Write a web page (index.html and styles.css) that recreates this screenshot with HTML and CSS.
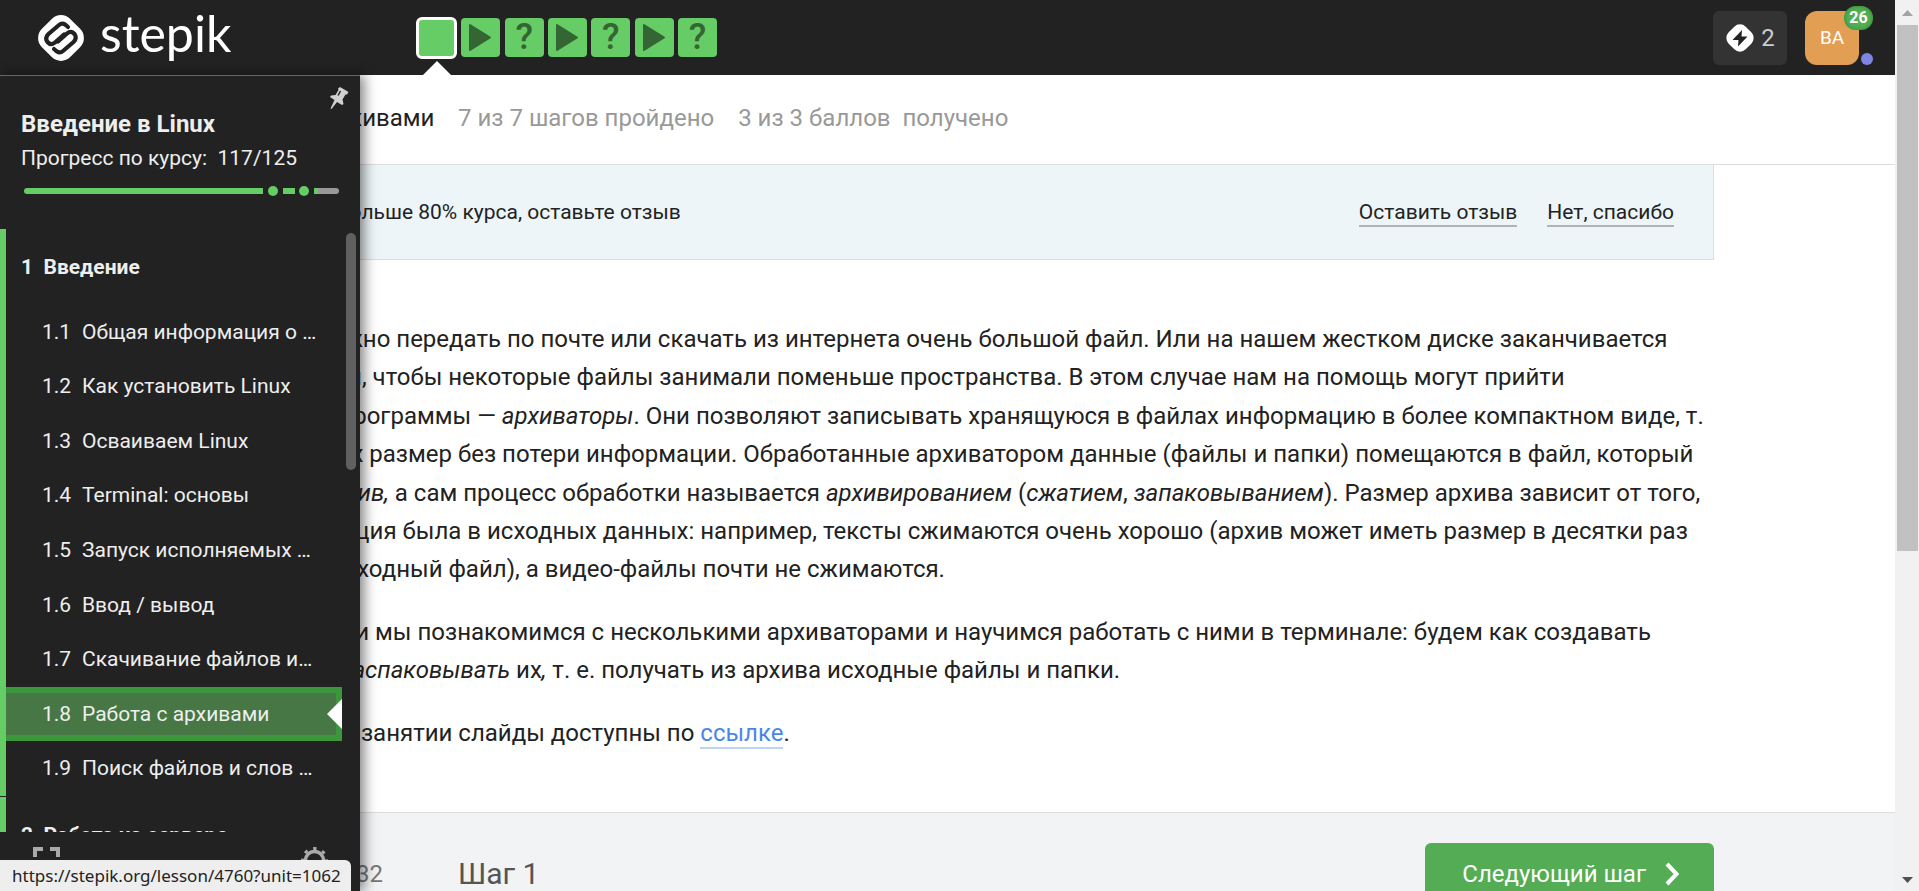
FILE: index.html
```html
<!DOCTYPE html>
<html lang="ru">
<head>
<meta charset="utf-8">
<title>Работа с архивами — Stepik</title>
<link rel="stylesheet" href="styles.css">
</head>
<body>
<div class="page">
  <header class="topbar">
    <a class="logo" href="#" aria-label="stepik">
      <svg class="logo-mark" viewBox="0 0 50 50" aria-hidden="true">
        <rect x="5" y="5" width="40" height="40" rx="13" transform="rotate(45 25 25)" fill="#fff"/>
        <path d="M32 14 L29 11.500 Q26 9.500 23 12 L12.500 21 Q8.500 25 11.500 29 Q15 33 19 29.500 L28 21.500" fill="none" stroke="#222" stroke-width="4.200" stroke-linecap="round"/>
        <path d="M18 36 L21 38.500 Q24 40.500 27 38 L37.500 29 Q41.500 25 38.500 21 Q35 17 31 20.500 L22 28.500" fill="none" stroke="#222" stroke-width="4.200" stroke-linecap="round"/>
      </svg>
      <span class="logo-text">stepik</span>
    </a>
    <nav class="steps" aria-label="Шаги">
      <a class="step step-active" href="#" aria-label="Шаг 1"></a>
      <a class="step" href="#" aria-label="Шаг 2"><svg viewBox="0 0 39 39"><path d="M9 7 L29 19.500 L9 32 Z" fill="#363" stroke="#363" stroke-width="2" stroke-linejoin="round"/></svg></a>
      <a class="step" href="#">?</a>
      <a class="step" href="#" aria-label="Шаг 4"><svg viewBox="0 0 39 39"><path d="M9 7 L29 19.500 L9 32 Z" fill="#363" stroke="#363" stroke-width="2" stroke-linejoin="round"/></svg></a>
      <a class="step" href="#">?</a>
      <a class="step" href="#" aria-label="Шаг 6"><svg viewBox="0 0 39 39"><path d="M9 7 L29 19.500 L9 32 Z" fill="#363" stroke="#363" stroke-width="2" stroke-linejoin="round"/></svg></a>
      <a class="step" href="#">?</a>
    </nav>
    <div class="account">
      <button class="streak" type="button">
        <svg viewBox="0 0 30 30" aria-hidden="true"><rect x="3" y="3" width="24" height="24" rx="8" transform="rotate(45 15 15)" fill="#fff"/><path d="M17 7 L7.500 17 H13.500 L13 23.500 L22.500 13.500 H16.500 Z" fill="#222"/></svg>
        <span>2</span>
      </button>
      <button class="avatar" type="button">BA<span class="badge">26</span><span class="dot"></span></button>
    </div>
  </header>

  <div class="lesson-head">
    <span class="lesson-title">1.8 Работа с архивами</span>
    <span>7 из 7 шагов пройдено</span>
    <span>3 из 3 баллов&nbsp; получено</span>
  </div>

  <main class="column">
    <div class="review">
      <span class="review-text">Вы прошли больше 80% курса, оставьте отзыв</span>
      <a href="#">Оставить отзыв</a>
      <a href="#">Нет, спасибо</a>
    </div>
    <article class="text">
      <p>Иногда нам нужно передать по почте или скачать из интернета очень большой файл. Или на нашем жестком диске заканчивается<br>место и хочется, чтобы некоторые файлы занимали поменьше пространства. В этом случае нам на помощь могут прийти<br>специальные программы — <em>архиваторы</em>. Они позволяют записывать хранящуюся в файлах информацию в более компактном виде, т.<br>е. уменьшать их размер без потери информации. Обработанные архиватором данные (файлы и папки) помещаются в файл, который<br>называется <em>архив,</em> а сам процесс обработки называется <em>архивированием</em> (<em>сжатием</em>, <em>запаковыванием</em>). Размер архива зависит от того,<br>какая информация была в исходных данных: например, тексты сжимаются очень хорошо (архив может иметь размер в десятки раз<br>меньше, чем исходный файл), а видео-файлы почти не сжимаются.</p>
      <p>На этом занятии мы познакомимся с несколькими архиваторами и научимся работать с ними в терминале: будем как создавать<br>архивы, так и <em>распаковывать</em> их<em>,</em> т. е. получать из архива исходные файлы и папки.</p>
      <p>Показанные на занятии слайды доступны по <a href="#">ссылке</a>.</p>
    </article>
  </main>

  <footer class="foot">
    <div class="foot-row">
      <span class="likes">32</span>
      <span class="step-name">Шаг 1</span>
      <button class="next" type="button">Следующий шаг
        <svg viewBox="0 0 16 24" aria-hidden="true"><path d="M3 2 L12.500 12 L3 22" fill="none" stroke="#fff" stroke-width="4"/></svg>
      </button>
    </div>
  </footer>

  <aside class="sidebar">
    <div class="course">
      <button class="pin" type="button" aria-label="Закрепить">
        <svg viewBox="0 0 20 24"><path d="M10 1 L18.500 6 L17 8.500 L15.500 8.500 L12.500 13.500 L13.500 18 L12 19 L7 16 L1.500 23 L0.500 22.500 L4.500 14 L0 11 L1 9.500 L5.500 9 L8.500 4 L8 2.500 Z" fill="#d0d0d0"/><path d="M10.500 5 L8 9.500" stroke="#222" stroke-width="1.500"/></svg>
      </button>
      <h1 class="course-title">Введение в Linux</h1>
      <div class="course-progress">Прогресс по курсу:&nbsp; 117/125</div>
      <svg class="bar" viewBox="0 0 315 10" role="img" aria-label="117/125">
        <path d="M3 5 H239" stroke="#6c6" stroke-width="6"/><circle cx="3" cy="5" r="3" fill="#6c6"/>
        <circle cx="249" cy="5" r="5" fill="#6c6"/><path d="M259 5 H271" stroke="#6c6" stroke-width="6"/>
        <circle cx="280" cy="5" r="5" fill="#6c6"/><path d="M290 5 H294" stroke="#6c6" stroke-width="6"/>
        <path d="M294 5 H312" stroke="#999" stroke-width="6"/><circle cx="312" cy="5" r="3" fill="#999"/>
      </svg>
    </div>
    <nav class="toc">
      <div class="toc-list">
        <section class="module">
          <h2>1&nbsp; Введение</h2>
          <a href="#"><span>1.1</span>Общая информация о …</a>
          <a href="#"><span>1.2</span>Как установить Linux</a>
          <a href="#"><span>1.3</span>Осваиваем Linux</a>
          <a href="#"><span>1.4</span>Terminal: основы</a>
          <a href="#"><span>1.5</span>Запуск исполняемых …</a>
          <a href="#"><span>1.6</span>Ввод / вывод</a>
          <a href="#"><span>1.7</span>Скачивание файлов и…</a>
          <a href="#" class="current"><span>1.8</span>Работа с архивами</a>
          <a href="#"><span>1.9</span>Поиск файлов и слов …</a>
        </section>
        <section class="module">
          <h2>2&nbsp; Работа на сервере</h2>
        </section>
      </div>
      <div class="toc-scroll"></div>
    </nav>
    <div class="tools">
      <button type="button" aria-label="Во весь экран"><svg viewBox="0 0 27 27"><path d="M2 10 V2 H10 M17 2 H25 V10 M25 17 V25 H17 M10 25 H2 V17" fill="none" stroke="#aaa" stroke-width="4"/></svg></button>
      <button type="button" aria-label="Настройки"><svg viewBox="0 0 27 27"><circle cx="13.500" cy="13.500" r="9" fill="none" stroke="#aaa" stroke-width="3.500"/><circle cx="13.500" cy="13.500" r="12" fill="none" stroke="#aaa" stroke-width="3" stroke-dasharray="3.400 6.025" stroke-dashoffset="1.700"/></svg></button>
    </div>
  </aside>

  <div class="status">https://stepik.org/lesson/4760?unit=1062</div>
</div>
<div class="scrollbar" aria-hidden="true">
  <svg viewBox="0 0 24 25"><path d="M7 16 L12.500 10 L18 16 Z" fill="#a3a3a3"/></svg>
  <div class="thumb"></div>
  <svg viewBox="0 0 24 25"><path d="M7 11 L12.500 17 L18 11 Z" fill="#505050"/></svg>
</div>
</body>
</html>
```
FILE: styles.css
```css
* { box-sizing: border-box; }
body {
  margin: 0;
  height: 100vh;
  display: flex;
  overflow: hidden;
  background: #fff;
  color: #222;
  font-family: Roboto, "Liberation Sans", sans-serif;
  font-size: 24px;
}
button { border: 0; padding: 0; background: none; font: inherit; color: inherit; cursor: pointer; }
a { color: inherit; text-decoration: none; }
svg { display: block; }
.page { position: relative; flex: 1; min-width: 0; height: 100vh; overflow: hidden; display: flex; flex-direction: column; }

.topbar { flex: none; height: 75px; background: #222; display: flex; align-items: center; padding: 0 22px 0 36px; }
.logo { display: flex; align-items: center; gap: 14px; width: 380px; color: #fff; }
.logo-mark { width: 50px; height: 50px; }
.logo-text { font-family: Lato, sans-serif; font-size: 50px; line-height: 50px; margin-top: -10px; }
.steps { display: flex; justify-content: space-between; align-items: center; width: 301px; }
.step { width: 39px; height: 39px; border-radius: 4px; background: #6c6; color: #363; font-size: 36px; font-weight: 500; line-height: 39px; text-align: center; }
.step-active { position: relative; width: 41px; height: 42px; border: 3px solid #fff; border-radius: 6px; }
.step-active::after { content: ""; position: absolute; left: 50%; top: 41px; margin-left: -15px; border: 15px solid transparent; border-top-width: 0; border-bottom-color: #fff; }
.account { margin-left: auto; display: flex; gap: 18px; }
.streak { width: 74px; height: 54px; border-radius: 6px; background: #333; color: #ccc; display: flex; align-items: center; justify-content: center; gap: 6px; }
.streak svg { width: 30px; height: 30px; }
.avatar { position: relative; width: 54px; height: 54px; margin-right: 14px; border-radius: 12px; background: #e29e53; color: #fff; font-size: 19px; }
.badge { position: absolute; right: -14px; top: -5px; width: 29px; height: 24px; border-radius: 12px; background: #54ad54; box-shadow: inset 0 0 4px #2c8a2c; font-size: 16px; font-weight: 700; line-height: 24px; }
.dot { position: absolute; right: -14px; bottom: 0; width: 12px; height: 12px; border-radius: 6px; background: #7d87e2; }

.lesson-head { flex: none; height: 90px; padding: 0 181px 4px; border-bottom: 1px solid #ddd; display: flex; align-items: center; gap: 24px; color: #999; white-space: nowrap; }
.lesson-title { width: 253px; color: #222; text-align: right; }

.column { flex: none; padding: 0 181px; }
.review { height: 95px; background: #edf5f8; border: solid #ddd; border-width: 0 1px 1px; padding: 0 39px; display: flex; align-items: center; gap: 30px; font-size: 21px; line-height: 26px; white-space: nowrap; }
.review-text { flex: 1; }
.review a { padding-top: 1px; border-bottom: 2px solid #aeb4b8; }
.text { padding: 60px 0; line-height: 1.6; white-space: nowrap; }
.text p { margin: 0 0 24px; }
.text p:last-child { margin-bottom: 0; }
.text a { color: #4a86e8; border-bottom: 2px solid #bcd3f8; }

.foot { flex: 1 0 auto; border-top: 1px solid #ddd; background: #f2f3f5; padding: 30px 181px; }
.foot-row { display: flex; align-items: center; height: 62px; color: #555; }
.likes { width: 202px; text-align: right; color: #777; }
.step-name { margin-left: 75px; font-size: 30px; }
.next { margin-left: auto; height: 62px; padding: 0 34px 0 37px; border-radius: 6px; background: #54ad54; color: #fff; display: flex; align-items: center; gap: 18px; }
.next svg { width: 16px; height: 24px; }

.sidebar { position: absolute; left: 0; top: 75px; bottom: 0; width: 360px; background: #222; border-top: 1px solid #666; box-shadow: 4px 0 12px rgba(0, 0, 0, 0.5); color: #eee; display: flex; flex-direction: column; font-size: 21px; }
.course { position: relative; flex: none; height: 153px; padding: 31px 21px 0 21px; }
.course-title { margin: 0; font-size: 24px; line-height: 34px; font-weight: 700; }
.course-progress { line-height: 34px; }
.bar { width: 315px; height: 10px; margin: 11px 0 0 3px; }
.pin { position: absolute; right: 10px; top: 10px; width: 20px; height: 24px; }
.toc { position: relative; flex: none; height: calc(100vh - 288px); overflow: hidden; }
.module { border-left: 6px solid #6c6; margin-bottom: 1px; line-height: 2.6; }
.module h2 { margin: 0; padding: 11px 15px 10px; font-size: 21px; font-weight: 700; }
.module a { display: flex; padding-left: 36px; white-space: nowrap; }
.module a span { width: 40px; }
.module .current { position: relative; margin-right: 18px; background: #467744; box-shadow: inset 0 6px #3c973c, inset -6px -6px #3c973c; }
.current::after { content: ""; position: absolute; right: 0; top: 50%; margin-top: -15px; border: 15px solid transparent; border-left-width: 0; border-right-color: #fff; }
.toc-scroll { position: absolute; right: 4px; top: 4px; width: 10px; height: 237px; border-radius: 5px; background: #606060; }
.tools { display: flex; justify-content: space-between; padding: 15px 32px 0 33px; }
.tools svg { width: 27px; height: 27px; }

.status { position: absolute; left: 0; bottom: 0; height: 31px; padding: 0 10px 0 12px; border-radius: 0 6px 0 0; background: #eee; color: #222; font-family: "Noto Sans", sans-serif; font-size: 17px; line-height: 32px; }

.scrollbar { flex: none; width: 24px; height: 100vh; background: #f1f1f1; display: flex; flex-direction: column; }
.scrollbar svg { width: 24px; height: 25px; }
.thumb { height: 59%; margin: 0 1px 0 2px; background: #c1c1c1; }
.scrollbar svg:last-child { margin-top: auto; }
```
